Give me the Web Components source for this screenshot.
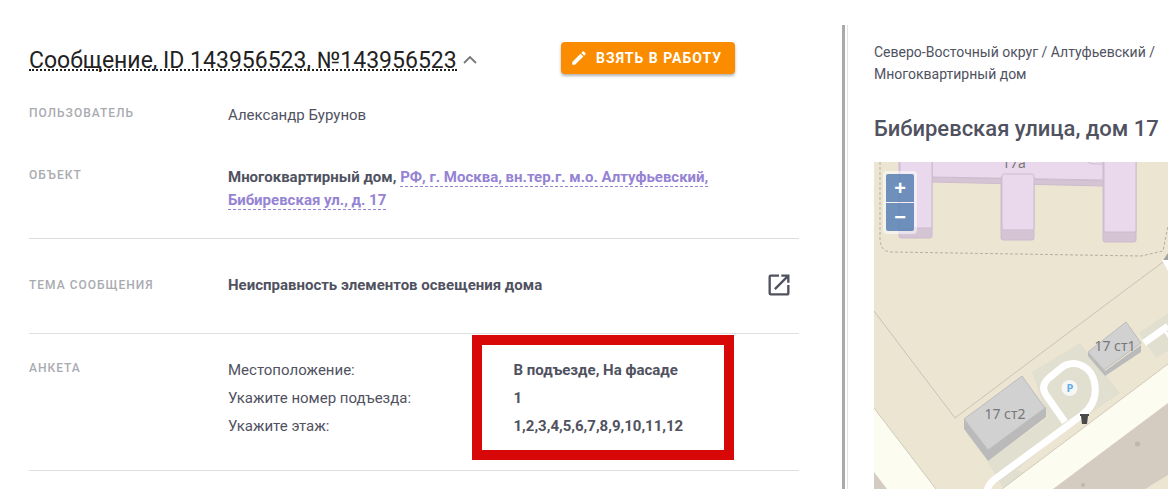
<!DOCTYPE html>
<html lang="ru">
<head>
<meta charset="utf-8">
<meta name="viewport" content="width=device-width, initial-scale=1">
<title>Сообщение 143956523</title>
<style>
  body {
    margin: 0;
    background-color: #fff;
    color: #50525f;
    font-family: Roboto, "Liberation Sans", sans-serif;
    font-size: 15px;
    line-height: 23px;
  }
  a {
    color: #9583d3;
    text-decoration: none;
    border-bottom: 1px dashed #9583d3;
  }
</style>
</head>
<body>
<message-page>
  <message-header slot="main" heading="Сообщение, ID 143956523, №143956523">Взять в работу</message-header>
  <message-row slot="main" label="Пользователь">Александр Бурунов</message-row>
  <message-row slot="main" label="Объект" class="object"><b>Многоквартирный дом, <a href="#/object">РФ, г. Москва, вн.тер.г. м.о. Алтуфьевский, Бибиревская ул., д. 17</a></b></message-row>
  <message-row slot="main" label="Тема сообщения" class="theme"><b>Неисправность элементов освещения дома</b><open-button slot="action"></open-button></message-row>
  <message-row slot="main" label="Анкета" class="form"><message-answers></message-answers></message-row>
  <object-panel slot="side" heading="Бибиревская улица, дом 17">
    Северо-Восточный округ / Алтуфьевский / Многоквартирный дом
    <object-map slot="map"></object-map>
  </object-panel>
</message-page>

<script>
function makeTemplate(html) {
  const template = document.createElement('template');
  template.innerHTML = html;
  return template;
}

class BaseComponent extends HTMLElement {
  constructor() {
    super();
    this.attachShadow({ mode: 'open' });
    this.shadowRoot.appendChild(this.constructor.template.content.cloneNode(true));
  }
}

/*----- Page -----*/
class MessagePage extends BaseComponent {
  static template = makeTemplate(/*html*/`
<style>
  :host {
    display: grid;
    grid-template-columns: minmax(0, 1fr) 326px;
    box-sizing: border-box;
    min-height: 100vh;
    padding-top: 25px;
  }
  main {
    padding: 17px 43px 18px 29px;
  }
  aside {
    display: flex;
    border-left: 3px solid #aaa;
    min-width: 0;
  }
  aside::before {
    content: "";
    width: 2px;
    border-right: 1px solid #e4e4e4;
  }
  ::slotted([slot="side"]) {
    flex: 1;
    min-width: 0;
  }
</style>
<main><slot name="main"></slot></main>
<aside><slot name="side"></slot></aside>
`);
}

/*----- Title and main action -----*/
class MessageHeader extends BaseComponent {
  static template = makeTemplate(/*html*/`
<style>
  :host {
    display: flex;
    justify-content: space-between;
    align-items: center;
    margin-bottom: 30px;
    padding-right: 64px;
  }
  .heading {
    display: flex;
    align-items: center;
    gap: 6px;
    padding-top: 4px;
  }
  h1 {
    margin: 0;
    font-size: 23px;
    font-weight: 400;
    line-height: 22px;
    color: #222;
    border-bottom: 2px dotted #222;
    height: 19px;
  }
  button {
    border: 0;
    padding: 0;
    background: none;
    font: inherit;
    cursor: pointer;
  }
  .toggle {
    display: flex;
    color: #777;
  }
  .take {
    display: flex;
    align-items: center;
    gap: 8px;
    height: 32px;
    padding: 0 13px 0 9px;
    border-radius: 4px;
    background-color: #fb8c00;
    color: #fff;
    font-size: 14px;
    font-weight: 700;
    letter-spacing: 1px;
    text-transform: uppercase;
    box-shadow: 0 2px 3px rgba(0, 0, 0, 0.3);
  }
</style>
<div class="heading">
  <h1></h1>
  <button class="toggle" aria-label="Свернуть">
    <svg width="14" height="14" viewBox="0 0 14 14"><path d="M1 10 7 4l6 6" fill="none" stroke="currentColor" stroke-width="1.800"/></svg>
  </button>
</div>
<button class="take">
  <svg width="18" height="18" viewBox="0 0 24 24"><path fill="currentColor" d="M3 17.250V21h3.750L17.810 9.940l-3.750-3.750L3 17.250zM20.710 7.040a1 1 0 0 0 0-1.410l-2.340-2.340a1 1 0 0 0-1.410 0l-1.830 1.830 3.750 3.750 1.830-1.830z"/></svg>
  <span><slot></slot></span>
</button>
`);

  connectedCallback() {
    this.shadowRoot.querySelector('h1').textContent = this.getAttribute('heading');
  }
}

/*----- Label and value -----*/
class MessageRow extends BaseComponent {
  static template = makeTemplate(/*html*/`
<style>
  :host {
    display: grid;
    grid-template-columns: 199px minmax(0, 1fr) auto;
    padding-bottom: 39px;
  }
  :host(.object) {
    padding-bottom: 26px;
    border-bottom: 1px solid #dcdcdc;
  }
  :host(.object) .value {
    padding-right: 64px;
  }
  :host(.theme) {
    align-items: center;
    padding: 32px 6px 34px 0;
    border-bottom: 1px solid #dfdfdf;
  }
  :host(.form) {
    padding: 25px 0 32px;
    border-bottom: 1px solid #dfdfdf;
  }
  .label {
    color: #a9abb0;
    font-size: 12px;
    font-weight: 500;
    line-height: 18px;
    letter-spacing: 1px;
    text-transform: uppercase;
  }
</style>
<div class="label"></div>
<div class="value"><slot></slot></div>
<slot name="action"></slot>
`);

  connectedCallback() {
    this.shadowRoot.querySelector('.label').textContent = this.getAttribute('label');
  }
}

class OpenButton extends BaseComponent {
  static template = makeTemplate(/*html*/`
<style>
  :host {
    display: block;
  }
  button {
    display: flex;
    border: 0;
    padding: 0;
    background: none;
    color: #50525f;
    cursor: pointer;
  }
</style>
<button aria-label="Открыть">
  <svg width="28" height="28" viewBox="0 0 24 24"><path fill="currentColor" d="M19 19H5V5h7V3H5a2 2 0 0 0-2 2v14a2 2 0 0 0 2 2h14c1.100 0 2-.9 2-2v-7h-2v7zM14 3v2h3.590l-9.830 9.830 1.410 1.410L19 6.410V10h2V3h-7z"/></svg>
</button>
`);
}

/*----- Questionnaire -----*/
class MessageAnswers extends BaseComponent {
  static template = makeTemplate(/*html*/`
<style>
  :host {
    display: block;
  }
  dl {
    display: grid;
    grid-template-columns: 1fr 1fr;
    row-gap: 5px;
    margin: 0;
    position: relative;
  }
  dd {
    margin: 0;
    font-weight: 700;
  }
  /* frame drawn over the answers */
  .frame {
    position: absolute;
    top: -24px;
    bottom: -22px;
    left: calc(50% - 42px);
    width: 262px;
    box-sizing: border-box;
    border: 10px solid #d90808;
    pointer-events: none;
  }
</style>
<dl>
  <dt>Местоположение:</dt><dd>В подъезде, На фасаде</dd>
  <dt>Укажите номер подъезда:</dt><dd>1</dd>
  <dt>Укажите этаж:</dt><dd>1,2,3,4,5,6,7,8,9,10,11,12</dd>
  <div class="frame"></div>
</dl>
`);
}

/*----- Side panel -----*/
class ObjectPanel extends BaseComponent {
  static template = makeTemplate(/*html*/`
<style>
  :host {
    display: flex;
    flex-direction: column;
    padding: 16px 0 0 26px;
  }
  nav {
    font-size: 14px;
    line-height: 22px;
  }
  h2 {
    margin: 32px 0 21px;
    font-size: 22px;
    font-weight: 500;
    line-height: 24px;
    white-space: nowrap;
  }
  ::slotted(object-map) {
    flex: 1;
  }
</style>
<nav><slot></slot></nav>
<h2></h2>
<slot name="map"></slot>
`);

  connectedCallback() {
    this.shadowRoot.querySelector('h2').textContent = this.getAttribute('heading');
  }
}

/*----- Map -----*/
class ObjectMap extends BaseComponent {
  static template = makeTemplate(/*html*/`
<style>
  :host {
    display: block;
    position: relative;
    overflow: hidden;
    min-height: 240px;
    background-color: #ebe5d2;
  }
  svg {
    position: absolute;
    width: 100%;
    height: 100%;
  }
  text {
    font-family: "Noto Sans", sans-serif;
    font-size: 14px;
    fill: #77777a;
    text-anchor: middle;
  }
  .zoom {
    position: absolute;
    top: 9px;
    left: 9px;
    display: grid;
    gap: 1px;
    padding: 3px;
    border-radius: 4px;
    background-color: rgba(255, 255, 255, 0.5);
  }
  button {
    display: grid;
    place-items: center;
    width: 28px;
    height: 28px;
    padding: 0;
    border: 0;
    background-color: rgba(76, 119, 174, 0.8);
    color: #fff;
    font: 700 20px/28px "Liberation Sans", sans-serif;
    cursor: pointer;
  }
  button:first-child {
    border-radius: 2px 2px 0 0;
  }
  button:last-child {
    border-radius: 0 0 2px 2px;
  }
</style>
<svg aria-hidden="true">
  <!-- yards along the road -->
  <path fill="#e1dfcf" d="M114 300 210 327h-80zM158 210l48-29 40 50-122 85-10-15 60-44z"/>
  <path fill="#e1dfcf" d="M265 171l29-20v38l-12 7zM114 299l63-46 20 10-70 58z"/>
  <!-- wide roads -->
  <path fill="#fcfcf1" d="M0 246 62 327H0z"/>
  <path fill="#d5ccc1" d="M0 310l13 17H0z"/>
  <path fill="#fcfcf1" d="M128 327 294 202v125z"/>
  <path fill="#d5ccc1" d="M179 327 294 241v83l-4 3z"/>
  <path fill="#ebe5d2" d="M271 327l23-14v14z"/>
  <path fill="none" stroke="#cfcabb" d="M0 246 62 327M128 327 294 202"/>
  <circle cx="263.500" cy="282" r="2.500" fill="#bfb6ad"/>
  <circle cx="209" cy="323" r="2" fill="#bfb6ad"/>
  <!-- fences -->
  <path fill="none" stroke="#cbc1b5" d="M0 149 81 256 214 156 289 100"/>
  <path fill="none" stroke="#b9ae9f" stroke-dasharray="3 2" d="M6 0v76q0 14 12 14l249 4 22-5 5-25"/>
  <!-- building 17а -->
  <g stroke="#cdbbcf">
    <path fill="#d5c4d4" d="M58 15 230 19v5L58 20z"/>
    <path fill="#ead9ec" d="M58-2H230v20L58 15z"/>
    <rect x="25" y="-5" width="33" height="81" rx="2" fill="#d5c4d4"/>
    <path fill="#ead9ec" d="M26-2h32v68H26z"/>
    <rect x="127" y="14" width="33" height="64" rx="2" fill="#d5c4d4"/>
    <rect x="128" y="12" width="32" height="56" rx="2" fill="#ead9ec"/>
    <rect x="229" y="-5" width="33" height="85" rx="2" fill="#d5c4d4"/>
    <path fill="#ead9ec" d="M230-2h32v72h-32z"/>
    <path fill="none" d="M214 0q2 2 6 2h10"/>
  </g>
  <text x="140" y="6">17а</text>
  <!-- driveway -->
  <path fill="none" stroke="#fff" stroke-width="7" d="M113 329q1-7 8-12l87-64q15-11 13-29c-2-22-24-28-35-17l-11 9q-9 8-3 17l19 27M270 181l24-17"/>
  <path fill="#fff" d="M288 98l6-6v17zM290 170h4v6z"/>
  <path fill="#a4a39f" d="M289 98l5-7v7z"/>
  <!-- garages -->
  <path fill="#bbbabb" d="M90 257l24 30 58-42v10l-58 44-24-32z"/>
  <path fill="#d1d1d2" stroke="#bcbcbd" d="M90 257 148 214 171 246 114 288z"/>
  <path fill="#bbbabb" d="M214 190l17 19 36-26v7l-36 24-17-20z"/>
  <path fill="#d1d1d2" stroke="#bcbcbd" d="M214 190 252 160 267 181 230 208z"/>
  <text x="131" y="257">17 ст2</text>
  <text x="241" y="189">17 ст1</text>
  <!-- parking and bin -->
  <circle cx="195.500" cy="226" r="8" fill="#f6f7f5"/>
  <text x="196" y="230" style="font-size: 11px; font-weight: 700; fill: #65aee6">P</text>
  <path fill="#4b4a4b" d="M206 252h9v2h-1l-1 8h-5l-1-8h-1z"/>
</svg>
<div class="zoom">
  <button aria-label="Приблизить">+</button>
  <button aria-label="Отдалить">−</button>
</div>
`);
}

window.customElements.define('message-page', MessagePage);
window.customElements.define('message-header', MessageHeader);
window.customElements.define('message-row', MessageRow);
window.customElements.define('open-button', OpenButton);
window.customElements.define('message-answers', MessageAnswers);
window.customElements.define('object-panel', ObjectPanel);
window.customElements.define('object-map', ObjectMap);
</script>
</body>
</html>
